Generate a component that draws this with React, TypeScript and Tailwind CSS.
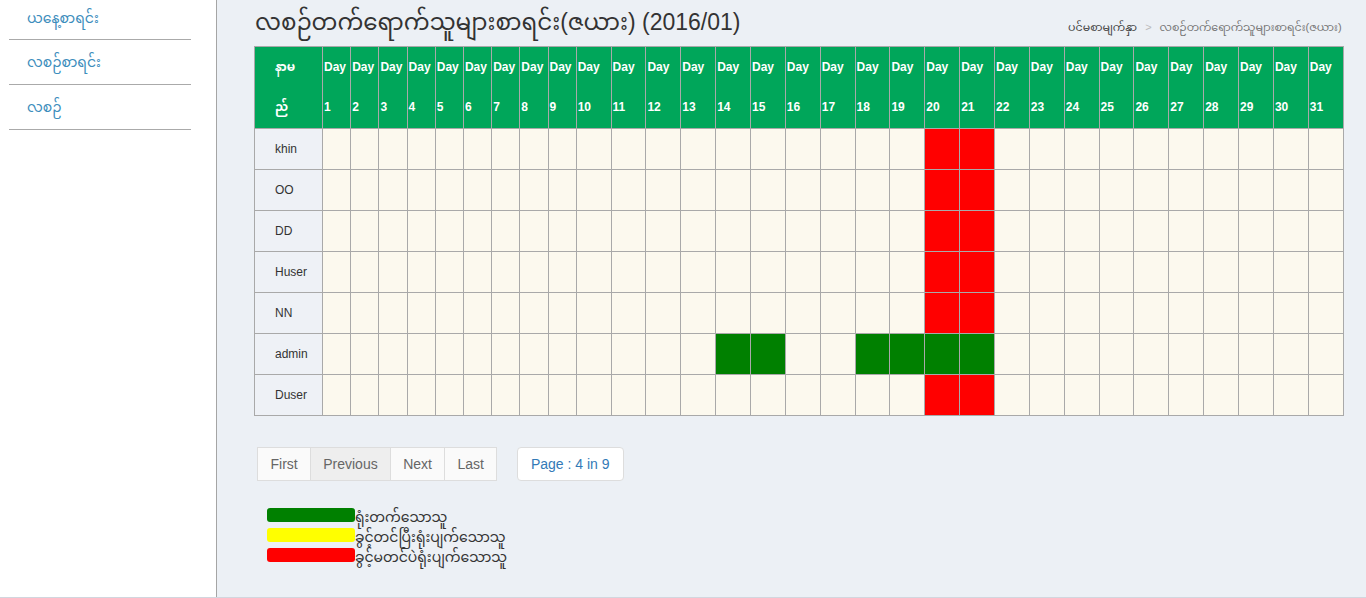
import React from 'react';

const FONT = '"Liberation Sans", "Noto Sans Myanmar", "Padauk", "Noto Sans", sans-serif';

const DAYS = Array.from({ length: 31 }, (_, i) => i + 1);

type Row = { name: string; red?: number[]; green?: number[] };

const ROWS: Row[] = [
  { name: 'khin', red: [20, 21] },
  { name: 'OO', red: [20, 21] },
  { name: 'DD', red: [20, 21] },
  { name: 'Huser', red: [20, 21] },
  { name: 'NN', red: [20, 21] },
  { name: 'admin', green: [14, 15, 18, 19, 20, 21] },
  { name: 'Duser', red: [20, 21] },
];

const MENU = ['ယနေ့စာရင်း', 'လစဉ်စာရင်း', 'လစဉ်'];

const LEGEND = [
  { color: 'bg-[#008000]', label: 'ရုံးတက်သောသူ' },
  { color: 'bg-[#ffff00]', label: 'ခွင့်တင်ပြီးရုံးပျက်သောသူ' },
  { color: 'bg-[#ff0000]', label: 'ခွင့်မတင်ပဲရုံးပျက်သောသူ' },
];

function cellBg(row: Row, d: number) {
  if (row.green?.includes(d)) return 'bg-[#008000]';
  if (row.red?.includes(d)) return 'bg-[#ff0000]';
  return 'bg-[#fcf9ee]';
}

export default function App() {
  return (
    <div className="flex h-[598px] w-[1366px] overflow-hidden border-b border-[#d2d6de]" style={{ fontFamily: FONT }}>
      {/* sidebar */}
      <aside className="w-[217px] shrink-0 border-r border-[#a5a5a5] bg-white">
        <ul className="mx-[9px] w-[182px]">
          {MENU.map((m, i) => (
            <li
              key={m}
              className={`border-b border-[#aaaaaa] pl-[18px] text-[14px] leading-[22px] text-[#3c8dbc] ${
                i === 0 ? 'pt-[7px] pb-[10px]' : 'py-[11px]'
              }`}
            >
              {m}
            </li>
          ))}
        </ul>
      </aside>

      {/* main */}
      <main className="flex-1 bg-[#ecf0f5] pl-[37px] pr-[23px]">
        <div className="flex h-[46px] items-start justify-between">
          <h1 className="pt-[6px] pl-[1px] text-[23px] leading-[32px] font-normal text-[#333333]">
            လစဉ်တက်ရောက်သူများစာရင်း(ဇယား) (2016/01)
          </h1>
          <div className="flex items-center gap-[8px] pt-[18px] pr-[2px] text-[11px] leading-[18px]">
            <span className="text-[#444444]">ပင်မစာမျက်နှာ</span>
            <span className="text-[#bbbbbb]">&gt;</span>
            <span className="text-[#777777]">လစဉ်တက်ရောက်သူများစာရင်း(ဇယား)</span>
          </div>
        </div>

        <table className="w-[1089px] table-fixed border-collapse border border-[#a9a9a9]">
          <colgroup>
            <col className="w-[68px]" />
            {DAYS.map((d) => (
              <col key={d} className={d < 10 ? 'w-[28.2px]' : 'w-[34.86px]'} />
            ))}
          </colgroup>
          <thead>
            <tr className="bg-[#00a65a] text-white">
              <th className="border border-[#a9a9a9] pb-[1px] pl-[20px] text-left align-top text-[12px] leading-[40px] font-bold">
                နာမ
                <br />
                ည်
              </th>
              {DAYS.map((d) => (
                <th
                  key={d}
                  className="overflow-visible whitespace-nowrap border border-[#a9a9a9] pb-[1px] pl-[1px] text-left align-top text-[12px] leading-[40px] font-bold"
                >
                  Day
                  <br />
                  {d}
                </th>
              ))}
            </tr>
          </thead>
          <tbody>
            {ROWS.map((row) => (
              <tr key={row.name} className="h-[41px]">
                <td className="border border-[#a9a9a9] bg-[#eef1f6] pl-[20px] text-[12px] text-[#333333]">
                  {row.name}
                </td>
                {DAYS.map((d) => (
                  <td key={d} className={`border border-[#a9a9a9] ${cellBg(row, d)}`} />
                ))}
              </tr>
            ))}
          </tbody>
        </table>

        <div className="mt-[31px] ml-[3px] flex items-center gap-[20px]">
          <div className="flex text-[14px] leading-[20px] text-[#666666]">
            <span className="border border-[#dddddd] bg-[#fafafa] px-[12.5px] py-[6px]">First</span>
            <span className="-ml-px border border-[#dddddd] bg-[#eeeeee] px-[12px] py-[6px]">Previous</span>
            <span className="-ml-px border border-[#dddddd] bg-[#fafafa] px-[12.5px] py-[6px]">Next</span>
            <span className="-ml-px border border-[#dddddd] bg-[#fafafa] px-[12px] py-[6px]">Last</span>
          </div>
          <span className="rounded-[4px] border border-[#dddddd] bg-white px-[13px] py-[6px] text-[14px] leading-[20px] text-[#337ab7]">
            Page : 4 in 9
          </span>
        </div>

        <div className="mt-[27px] ml-[13px] flex flex-col">
          {LEGEND.map((l) => (
            <div key={l.label} className="flex h-[20px] items-start">
              <span className={`h-[14px] w-[88px] rounded-[3px] ${l.color}`} />
              <span className="text-[14px] leading-[18px] text-[#333333]">{l.label}</span>
            </div>
          ))}
        </div>
      </main>
    </div>
  );
}
